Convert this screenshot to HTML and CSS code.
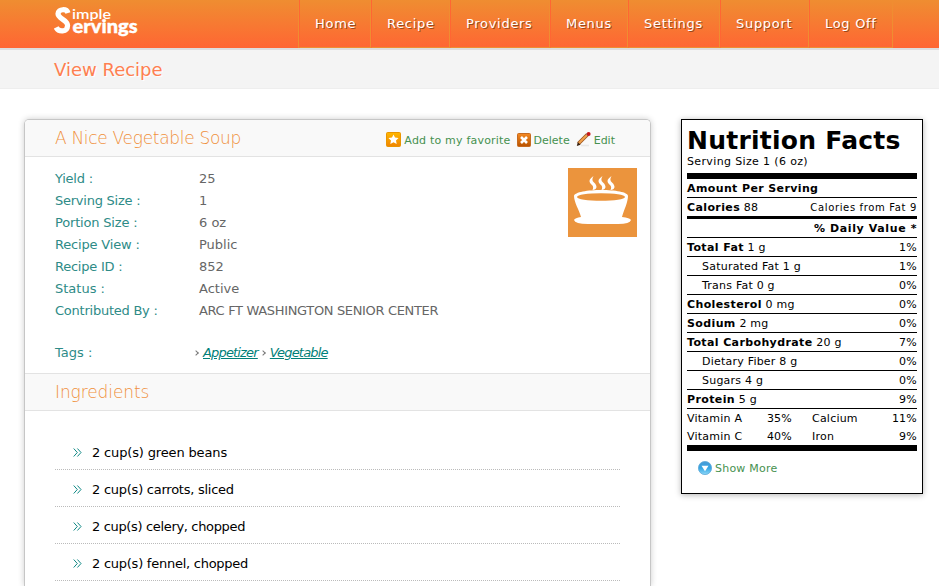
FILE: index.html
```html
<!DOCTYPE html>
<html lang="en">
<head>
<meta charset="utf-8">
<title>View Recipe</title>
<link rel="stylesheet" href="styles.css">
</head>
<body>
<header class="top">
  <svg class="logo" width="90" height="40" viewBox="0 0 90 40">
    <path class="logo-s" d="M14 13C12.800 8.500 4.300 8.500 4 13.800C4 19 13.600 19.500 13.600 25.500C13.400 32.500 4.500 32 2.200 27.500"/>
    <text class="logo-a" x="18" y="18.500" textLength="39" lengthAdjust="spacingAndGlyphs">imple</text>
    <text class="logo-b" x="18.500" y="33" textLength="65" lengthAdjust="spacingAndGlyphs">ervings</text>
  </svg>
  <nav class="nav">
    <a>Home</a><a>Recipe</a><a>Providers</a><a>Menus</a><a>Settings</a><a>Support</a><a>Log Off</a>
  </nav>
</header>
<div class="titlebar"><h1>View Recipe</h1></div>
<main class="content">
  <section class="card">
    <div class="bar">
      <h2 class="name-title">A Nice Vegetable Soup</h2>
      <div class="actions">
        <a class="fav"><svg width="15" height="15" viewBox="0 0 15 15"><defs><linearGradient id="g1" x2="0" y2="1"><stop stop-color="#ffb800"/><stop offset="1" stop-color="#f08400"/></linearGradient></defs><rect x=".5" y=".5" width="14" height="14" rx="1" fill="url(#g1)" stroke="#ea9500"/><path d="M7.500 2.500l1.500 3.100 3.600.5-2.600 2.400.7 3.500-3.200-1.800-3.200 1.800.7-3.500-2.600-2.400 3.600-.5z" fill="#fff"/></svg><span>Add to my favorite</span></a>
        <a class="del"><svg width="14" height="14" viewBox="0 0 14 14"><defs><linearGradient id="g2" x2="0" y2="1"><stop stop-color="#f58a22"/><stop offset="1" stop-color="#b85200"/></linearGradient></defs><rect x=".5" y=".5" width="13" height="13" rx="1" fill="url(#g2)" stroke="#c66a20"/><path d="M4 4l6 6M10 4l-6 6" stroke="#fff" stroke-width="2.600"/></svg><span>Delete</span></a>
        <a class="edit"><svg width="15" height="15" viewBox="0 0 15 15"><path d="M5 13.500h8" stroke="#e8e8e8" stroke-width="1.500"/><path d="M2.500 11.500L11.500 2.500" stroke="#9a5420" stroke-width="3.800"/><path d="M2.500 11.500L11 3" stroke="#f0a04c" stroke-width="2.200"/><path d="M.8 14l1-4 2.800 2.800z" fill="#3a2210"/><path d="M10.900 3.100l.8-.8" stroke="#999" stroke-width="3.200"/><circle cx="12.600" cy="2" r="2" fill="#c81818"/></svg><span>Edit</span></a>
      </div>
    </div>
    <div class="info">
      <dl>
        <dt>Yield :</dt><dd>25</dd>
        <dt>Serving Size :</dt><dd>1</dd>
        <dt class="portion">Portion Size :</dt><dd>6 oz</dd>
        <dt class="portion">Recipe View :</dt><dd>Public</dd>
        <dt>Recipe ID :</dt><dd>852</dd>
        <dt class="normal">Status :</dt><dd>Active</dd>
        <dt>Contributed By :</dt><dd class="tight">ARC FT WASHINGTON SENIOR CENTER</dd>
        <dt class="tags-label normal">Tags :</dt>
        <dd class="tags"><i class="chev"></i><a>Appetizer</a><i class="chev"></i><a>Vegetable</a></dd>
      </dl>
      <svg class="soup" width="69" height="69" viewBox="0 0 69 69"><rect width="69" height="69" fill="#eb943d"/><g fill="#fff"><path d="M6 28C7 20 60 20 60 28C60 34 56 42 54 49Q62 50 63 52Q62 56 50 56H20Q7 56 6 52Q7 50 13 49C11 42 6 34 6 28z"/><path d="M25.500 8C20 12 21 14 24 17Q26 19 24.500 22C29 22 30 18 26 14.500Q23 12 25.500 8zM34.500 8C29 12 30 14 33 17Q35 19 33.500 22C38 22 39 18 35 14.500Q32 12 34.500 8zM43.500 8C38 12 39 14 42 17Q44 19 42.500 22C47 22 48 18 44 14.500Q41 12 43.500 8z"/></g><ellipse cx="33" cy="29" rx="24" ry="3.800" fill="#eb943d"/></svg>
    </div>
    <div class="bar second"><h2>Ingredients</h2></div>
    <ul class="ingredients">
      <li><svg width="9" height="9" viewBox="0 0 9 9"><path d="M.7.500l3.600 4-3.600 4M4.400.5L8 4.500l-3.600 4"/></svg><span class="wide">2 cup(s) green beans</span></li>
      <li><svg width="9" height="9" viewBox="0 0 9 9"><path d="M.7.500l3.600 4-3.600 4M4.400.5L8 4.500l-3.600 4"/></svg>2 cup(s) carrots, sliced</li>
      <li><svg width="9" height="9" viewBox="0 0 9 9"><path d="M.7.500l3.600 4-3.600 4M4.400.5L8 4.500l-3.600 4"/></svg><span class="tight">2 cup(s) celery, chopped</span></li>
      <li><svg width="9" height="9" viewBox="0 0 9 9"><path d="M.7.500l3.600 4-3.600 4M4.400.5L8 4.500l-3.600 4"/></svg>2 cup(s) fennel, chopped</li>
    </ul>
  </section>
  <aside class="facts">
    <h3>Nutrition Facts</h3>
    <p class="size">Serving Size 1 (6 oz)</p>
    <div class="row first"><b>Amount Per Serving</b></div>
    <div class="row"><span><b>Calories</b> 88</span><span class="fromfat">Calories from Fat 9</span></div>
    <div class="row daily"><b>% Daily Value *</b></div>
    <div class="row"><span><b>Total Fat</b> 1 g</span><span>1%</span></div>
    <div class="row sub"><span>Saturated Fat 1 g</span><span>1%</span></div>
    <div class="row sub"><span>Trans Fat 0 g</span><span>0%</span></div>
    <div class="row"><span><b>Cholesterol</b> 0 mg</span><span>0%</span></div>
    <div class="row"><span><b>Sodium</b> 2 mg</span><span>0%</span></div>
    <div class="row"><span><b>Total Carbohydrate</b> 20 g</span><span>7%</span></div>
    <div class="row sub"><span>Dietary Fiber 8 g</span><span>0%</span></div>
    <div class="row sub"><span>Sugars 4 g</span><span>0%</span></div>
    <div class="row"><span><b>Protein</b> 5 g</span><span>9%</span></div>
    <div class="vitamins">
      <span>Vitamin A</span><span class="num">35%</span><span class="name">Calcium</span><span class="num">11%</span>
      <span>Vitamin C</span><span class="num">40%</span><span class="name">Iron</span><span class="num">9%</span>
    </div>
    <a class="more"><svg width="14" height="14" viewBox="0 0 14 14"><defs><linearGradient id="g3" x2="0" y2="1"><stop stop-color="#4a9bd6"/><stop offset=".5" stop-color="#35a5e3"/><stop offset="1" stop-color="#8ed8f8"/></linearGradient></defs><circle cx="7" cy="7" r="6.600" fill="url(#g3)" stroke="#5faad8" stroke-width=".8"/><path d="M3.500 4.800h7L7 10.200z" fill="#fff"/></svg><span>Show More</span></a>
  </aside>
</main>
</body>
</html>
```
FILE: styles.css
```css
* { box-sizing: border-box; margin: 0; padding: 0; }
html, body { height: 586px; overflow: hidden; }
body { background: #fff; font: 13px/22px Verdana, "DejaVu Sans", sans-serif; color: #000; }
b { font-weight: bold; letter-spacing: .38px; }

.top { height: 50px; display: flex; padding-left: 54px; border-bottom: 2px solid #ddd; background: linear-gradient(#ef8d31, #ff6633) padding-box; }
.logo { width: 90px; margin-right: 154px; fill: #fff; flex: none; }
.logo-s { fill: none; stroke: #fff; stroke-width: 5.2; }
.logo-a { font: 600 14px Lato, sans-serif; }
.logo-b { font: 900 19px Lato, sans-serif; stroke: #fff; stroke-width: .4; }
.nav { height: 48px; display: grid; grid-template-columns: 72px 79px 100px 78px 92px 89px 84px; border-left: 1px solid #ef8d31; }
.nav a { padding-left: 15px; border: solid #ef8d31; border-width: 0 1px 1px 0; border-left: 1px solid #ff6633; color: #fff; line-height: 47px; letter-spacing: .7px; text-shadow: 1px 1px 0 rgba(90,40,15,.6); white-space: nowrap; }

.titlebar { height: 39px; padding-left: 54px; background: #f4f4f4; border-bottom: 1px solid #eee; }
.titlebar h1 { font-size: 18px; font-weight: normal; line-height: 39px; color: #ff7f50; text-shadow: 1px 1px 0 #fff; }

.content { display: flex; align-items: flex-start; gap: 30px; padding: 30px 16px 0 24px; }
.card { width: 627px; height: 467px; border: 1px solid #c6c6c6; border-bottom: 0; border-radius: 5px 5px 0 0; box-shadow: 0 0 6px rgba(0,0,0,.2); overflow: hidden; flex: none; }
.bar { height: 37px; display: flex; justify-content: space-between; padding: 0 35px 0 30px; background: #f9f9f9; border-bottom: 1px solid #e3e3e3; }
.bar h2 { font-size: 17px; font-weight: 200; line-height: 37px; letter-spacing: -.1px; color: #f0903c; white-space: nowrap; }
.bar .name-title { letter-spacing: -.3px; }
.second { height: 38px; border-top: 1px solid #e3e3e3; }
.actions { display: flex; gap: 6px; font-size: 11px; line-height: 37px; color: #46914f; }
.actions a, .more { display: flex; align-items: center; gap: 3px; white-space: nowrap; }
.fav { letter-spacing: .2px; }
.actions svg { margin-top: 3px; }
.actions span { padding-top: 4px; }

.info { height: 216px; padding: 11px 13px 0 30px; display: flex; justify-content: space-between; }
dl { width: 420px; display: grid; grid-template-columns: 144px 1fr; grid-template-rows: repeat(7, 22px) 42px; }
dt { color: #2e8b87; letter-spacing: -.24px; }
dd { color: #666; white-space: nowrap; }
.tight { letter-spacing: -.34px; }
.portion { letter-spacing: -.18px; }
.normal { letter-spacing: 0; }
.tags-label, .tags { padding-top: 20px; }
.tags { display: flex; align-items: center; margin-left: -5px; letter-spacing: -.83px; }
.tags a { color: #008078; font-style: italic; text-decoration: underline; margin: 0 3px 0 5px; }
.chev { width: 4px; height: 4px; border: solid #777; border-width: 1px 1px 0 0; transform: rotate(45deg); }

.ingredients { list-style: none; padding: 22px 30px 0; letter-spacing: -.25px; }
.ingredients li { height: 37px; display: flex; align-items: center; padding: 3px 0 0 18px; border-bottom: 1px dotted #bbb; }
.ingredients svg { margin: 0 10px 1px 0; fill: none; stroke: #108884; }
.wide { letter-spacing: -.15px; }

.facts { width: 242px; height: 375px; padding: 5px; border: 1px solid #000; box-shadow: 0 1px 6px rgba(0,0,0,.3); font-size: 11px; line-height: 18px; letter-spacing: .22px; }
.facts h3 { font-size: 25px; line-height: 32px; letter-spacing: .25px; white-space: nowrap; }
.size { height: 16px; line-height: 10px; letter-spacing: .36px; }
.row { height: 19px; padding-top: 1px; display: flex; justify-content: space-between; border-top: 1px solid #000; white-space: nowrap; }
.first { height: 24px; border-top-width: 6px; }
.fromfat { font-size: 10px; letter-spacing: .65px; }
.daily { height: 21px; border-top-width: 3px; justify-content: flex-end; }
.daily b { letter-spacing: .6px; }
.sub { padding-left: 15px; }
.vitamins { height: 43px; display: grid; grid-template-columns: 60px 45px 66px 59px; grid-template-rows: 18px 18px; padding-top: 1px; border-top: 1px solid #000; border-bottom: 6px solid #000; }
.num { text-align: right; }
.name { padding-left: 20px; }
.more { padding: 7px 0 0 11px; color: #46914f; }
.more span { padding-top: 2px; }
```
